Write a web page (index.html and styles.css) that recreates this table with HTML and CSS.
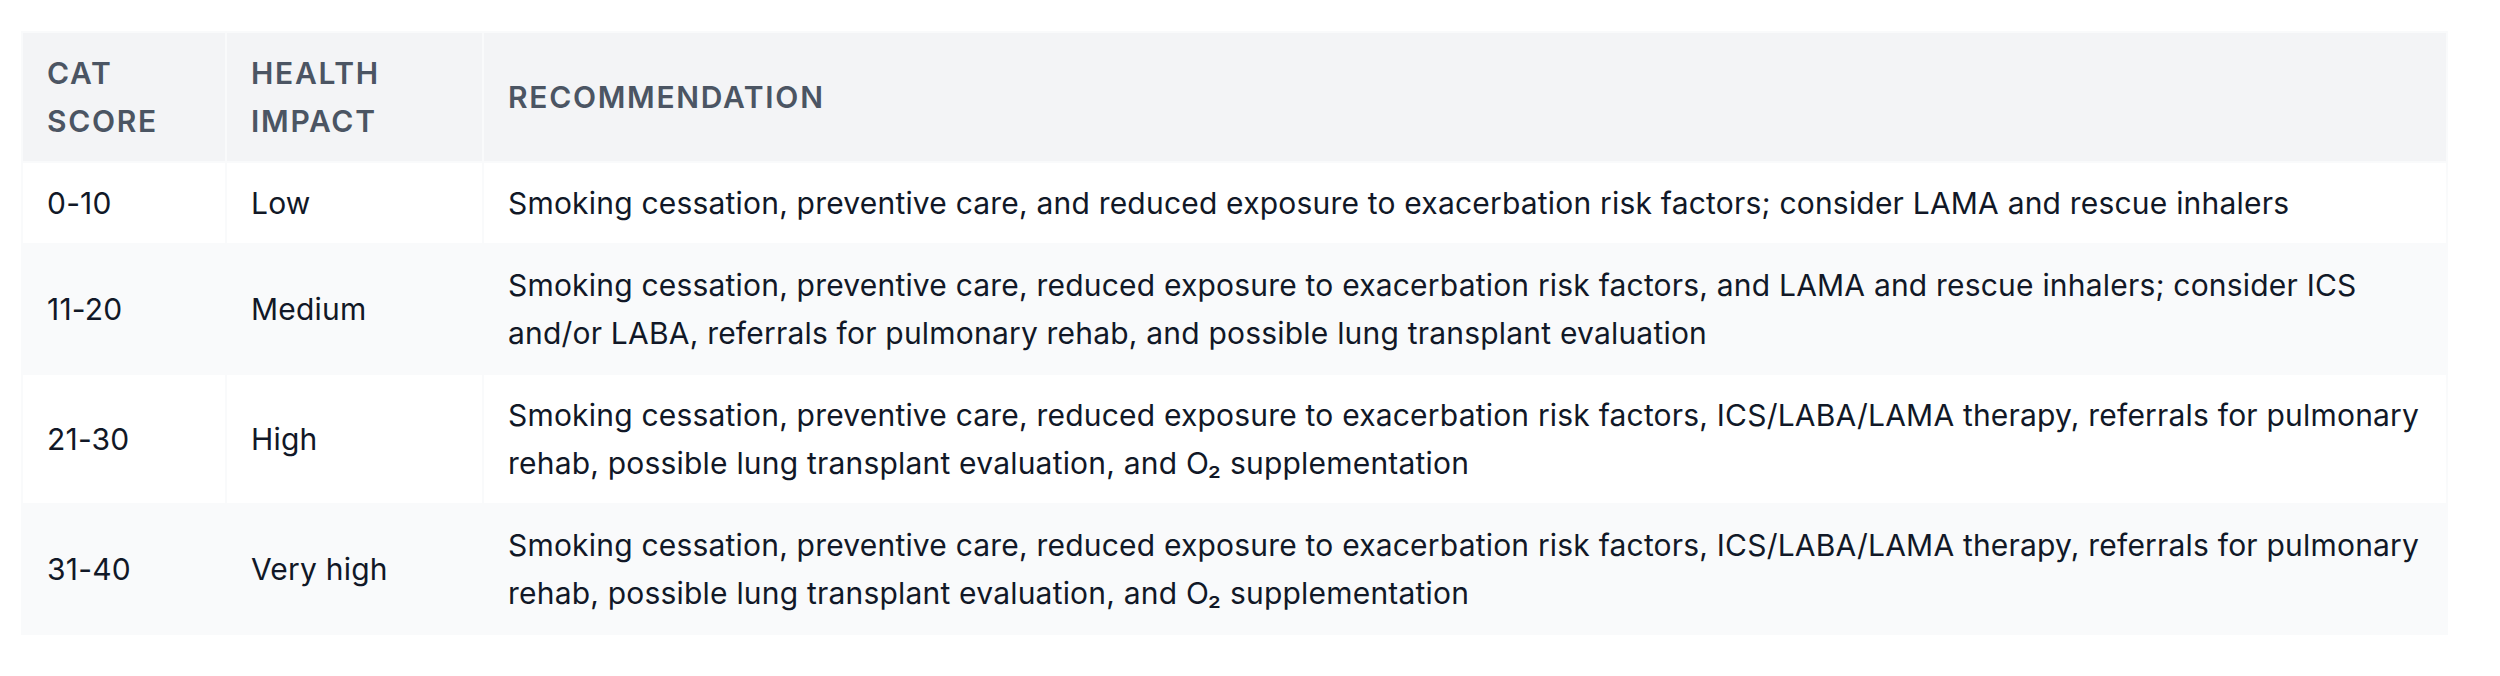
FILE: index.html
```html
<!DOCTYPE html>
<html lang="en">
<head>
<meta charset="utf-8">
<title>CAT Score Recommendations</title>
<link rel="stylesheet" href="styles.css">
</head>
<body>
<main class="page">
  <table class="cat-table">
    <thead>
      <tr>
        <th class="col-score">CAT SCORE</th>
        <th class="col-impact">HEALTH IMPACT</th>
        <th class="col-rec">RECOMMENDATION</th>
      </tr>
    </thead>
    <tbody>
      <tr>
        <td>0-10</td>
        <td>Low</td>
        <td class="rec">Smoking cessation, preventive care, and reduced exposure to exacerbation risk factors; consider LAMA and rescue inhalers</td>
      </tr>
      <tr>
        <td>11-20</td>
        <td>Medium</td>
        <td class="rec">Smoking cessation, preventive care, reduced exposure to exacerbation risk factors, and LAMA and rescue inhalers; consider ICS and/or LABA, referrals for pulmonary rehab, and possible lung transplant evaluation</td>
      </tr>
      <tr>
        <td>21-30</td>
        <td>High</td>
        <td class="rec">Smoking cessation, preventive care, reduced exposure to exacerbation risk factors, ICS/LABA/LAMA therapy, referrals for pulmonary rehab, possible lung transplant evaluation, and O₂ supplementation</td>
      </tr>
      <tr>
        <td>31-40</td>
        <td>Very high</td>
        <td class="rec">Smoking cessation, preventive care, reduced exposure to exacerbation risk factors, ICS/LABA/LAMA therapy, referrals for pulmonary rehab, possible lung transplant evaluation, and O₂ supplementation</td>
      </tr>
    </tbody>
  </table>
</main>
</body>
</html>
```
FILE: styles.css
```css
* {
  box-sizing: border-box;
}

html, body {
  margin: 0;
  padding: 0;
  background: #ffffff;
}

body {
  font-family: Inter, "Noto Sans", "Liberation Sans", sans-serif;
  color: #111827;
}

.page {
  padding: 31px 0 0 21px;
}

.cat-table {
  width: 2427px;
  table-layout: fixed;
  border-collapse: separate;
  border-spacing: 2px;
  background: #f9fafb;
  font-size: 30px;
  line-height: 48px;
}

.cat-table th,
.cat-table td {
  padding: 16px 24px;
  text-align: left;
  vertical-align: middle;
}

.cat-table th {
  background: #f3f4f6;
  color: #4b5563;
  font-weight: 600;
  text-transform: uppercase;
  letter-spacing: 1.7px;
}

.col-score {
  width: 202px;
}

.col-impact {
  width: 255px;
}

.cat-table tbody tr:nth-child(odd) td {
  background: #ffffff;
}

.cat-table tbody tr:nth-child(even) td {
  background: #f9fafb;
}

.cat-table td {
  font-weight: 400;
  color: #111827;
  letter-spacing: 0.2px;
}

.cat-table td.rec {
  padding-right: 12px;
}
```
